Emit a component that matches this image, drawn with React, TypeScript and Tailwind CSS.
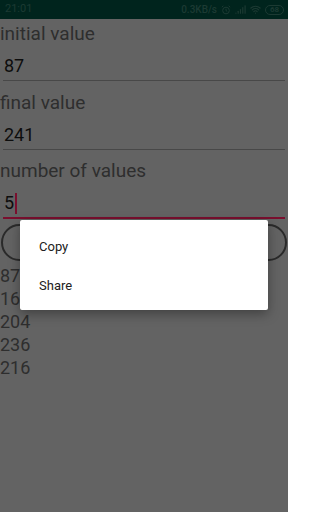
import { Signal, Wifi } from "lucide-react";

const fields = [
  { label: "initial value", value: "87" },
  { label: "final value", value: "241" },
  { label: "number of values", value: "5", focused: true },
];

const results = ["87", "169", "204", "236", "216"];

function AlarmIcon() {
  return (
    <svg viewBox="0 0 12 12" className="h-[10px] w-[10px]" fill="none" stroke="currentColor" strokeWidth="1.2">
      <circle cx="6" cy="6.6" r="4" />
      <path d="M6 4.4v2.3l1.4 0.9" />
      <path d="M1 2.6 2.8 1M11 2.6 9.2 1" />
    </svg>
  );
}

function StatusBar() {
  return (
    <div className="flex h-[19px] items-center justify-between bg-[#00241d] pl-[5px] pr-[4px] text-[11px] text-[#1c3a33]">
      <span>21:01</span>
      <div className="flex items-center gap-[4px]">
        <span className="text-[10px] font-medium">0.3KB/s</span>
        <AlarmIcon />
        <Signal className="h-[11px] w-[11px]" strokeWidth={2.5} />
        <Wifi className="h-[11px] w-[11px]" strokeWidth={2.5} />
        <span className="flex h-[10px] w-[19px] items-center justify-center rounded-full border border-[#1c3a33] text-[8px] font-bold leading-none">
          68
        </span>
      </div>
    </div>
  );
}

export default function App() {
  return (
    <div
      className="relative h-[512px] w-[288px] overflow-hidden bg-[#636363]"
      style={{ fontFamily: "Roboto, 'Noto Sans', sans-serif" }}
    >
      <StatusBar />

      <div className="text-[18px]">
        {fields.map((f) => (
          <div key={f.label} className="mb-[6.5px]">
            <div className="pt-[3px] text-[19px] leading-[24px] text-[#2e2e2e]">{f.label}</div>
            <div className="flex items-center pl-[4px] pt-[8px] leading-[24px] text-[#0d0d0d]">
              {f.value}
              {f.focused ? <span className="ml-[1px] h-[21px] w-[1.5px] bg-[#7a0f2e]" /> : null}
            </div>
            <div
              className={
                f.focused
                  ? "mx-[3px] mt-[2px] h-[1.5px] bg-[#7a0f2e]"
                  : "mx-[3px] mt-[2px] h-px bg-[#484848]"
              }
            />
          </div>
        ))}

        <div className="px-[1px]">
          <button className="mt-[-1px] flex h-[37px] w-full items-center justify-center rounded-full border-2 border-[#2a2a2a] text-[14px] font-medium text-[#2a2a2a]">
            GENERATE
          </button>
        </div>

        <div className="mt-[3px] leading-[23px] text-[#2e2e2e]">
          {results.map((r, i) => (
            <div key={i}>{r}</div>
          ))}
        </div>
      </div>

      <div className="absolute left-[20px] right-[20px] top-[220px] rounded-[2px] bg-white pb-[5px] pt-[7px] text-[13px] text-[#212121] shadow-[0_4px_12px_rgba(0,0,0,0.35)]">
        <div className="h-[39px] px-[19px] leading-[39px]">Copy</div>
        <div className="h-[39px] px-[19px] leading-[39px]">Share</div>
      </div>
    </div>
  );
}
